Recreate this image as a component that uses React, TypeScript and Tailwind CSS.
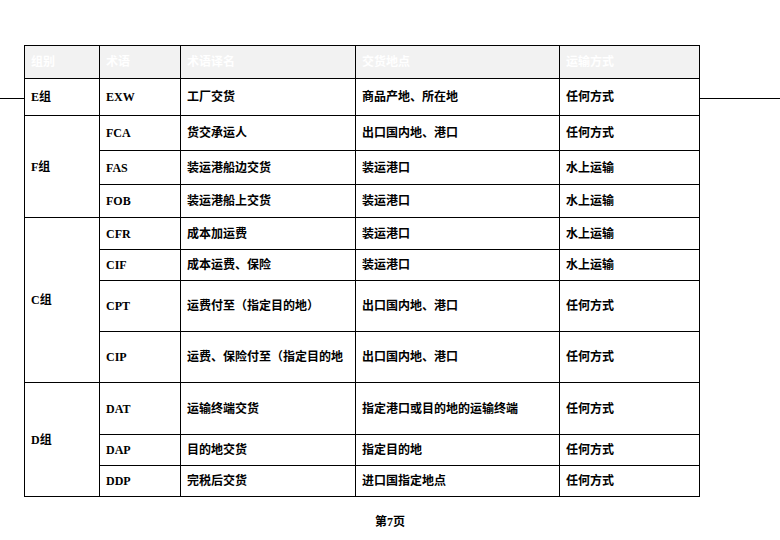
const font = { fontFamily: '"Liberation Serif", "Noto Sans CJK SC", serif' };

type Row = { group?: string; span?: number; term: string; name: string; place: string; mode: string; h: string };

const rows: Row[] = [
  { group: 'E组', span: 1, term: 'EXW', name: '工厂交货', place: '商品产地、所在地', mode: '任何方式', h: 'h-[37px]' },
  { group: 'F组', span: 3, term: 'FCA', name: '货交承运人', place: '出口国内地、港口', mode: '任何方式', h: 'h-[35px]' },
  { term: 'FAS', name: '装运港船边交货', place: '装运港口', mode: '水上运输', h: 'h-[34px]' },
  { term: 'FOB', name: '装运港船上交货', place: '装运港口', mode: '水上运输', h: 'h-[33px]' },
  { group: 'C组', span: 4, term: 'CFR', name: '成本加运费', place: '装运港口', mode: '水上运输', h: 'h-[32px]' },
  { term: 'CIF', name: '成本运费、保险', place: '装运港口', mode: '水上运输', h: 'h-[31px]' },
  { term: 'CPT', name: '运费付至（指定目的地）', place: '出口国内地、港口', mode: '任何方式', h: 'h-[51px]' },
  { term: 'CIP', name: '运费、保险付至（指定目的地', place: '出口国内地、港口', mode: '任何方式', h: 'h-[51px]' },
  { group: 'D组', span: 3, term: 'DAT', name: '运输终端交货', place: '指定港口或目的地的运输终端', mode: '任何方式', h: 'h-[52px]' },
  { term: 'DAP', name: '目的地交货', place: '指定目的地', mode: '任何方式', h: 'h-[31px]' },
  { term: 'DDP', name: '完税后交货', place: '进口国指定地点', mode: '任何方式', h: 'h-[31px]' },
];

const cell = 'border border-black px-[6px] align-middle whitespace-nowrap overflow-hidden';

export default function App() {
  return (
    <div className="relative w-[780px] h-[540px] bg-white text-black text-[12px] font-bold" style={font}>
      <div className="absolute left-0 right-0 top-[98px] h-px bg-black" />
      <div className="pt-[45px] pl-[24px]">
        <table className="relative bg-white border-collapse table-fixed w-[675px]">
          <colgroup>
            <col className="w-[75px]" />
            <col className="w-[81px]" />
            <col className="w-[175px]" />
            <col className="w-[204px]" />
            <col className="w-[140px]" />
          </colgroup>
          <thead>
            <tr className="h-[33px] bg-[#f2f2f2] text-white text-left">
              <th className={cell + ' font-bold'}>组别</th>
              <th className={cell + ' font-bold'}>术语</th>
              <th className={cell + ' font-bold'}>术语译名</th>
              <th className={cell + ' font-bold'}>交货地点</th>
              <th className={cell + ' font-bold'}>运输方式</th>
            </tr>
          </thead>
          <tbody>
            {rows.map((r) => (
              <tr key={r.term} className={r.h}>
                {r.group && (
                  <td rowSpan={r.span} className={cell}>
                    {r.group}
                  </td>
                )}
                <td className={cell}>{r.term}</td>
                <td className={cell}>{r.name}</td>
                <td className={cell}>{r.place}</td>
                <td className={cell}>{r.mode}</td>
              </tr>
            ))}
          </tbody>
        </table>
      </div>
      <div className="mt-[16px] text-center">第7页</div>
    </div>
  );
}
